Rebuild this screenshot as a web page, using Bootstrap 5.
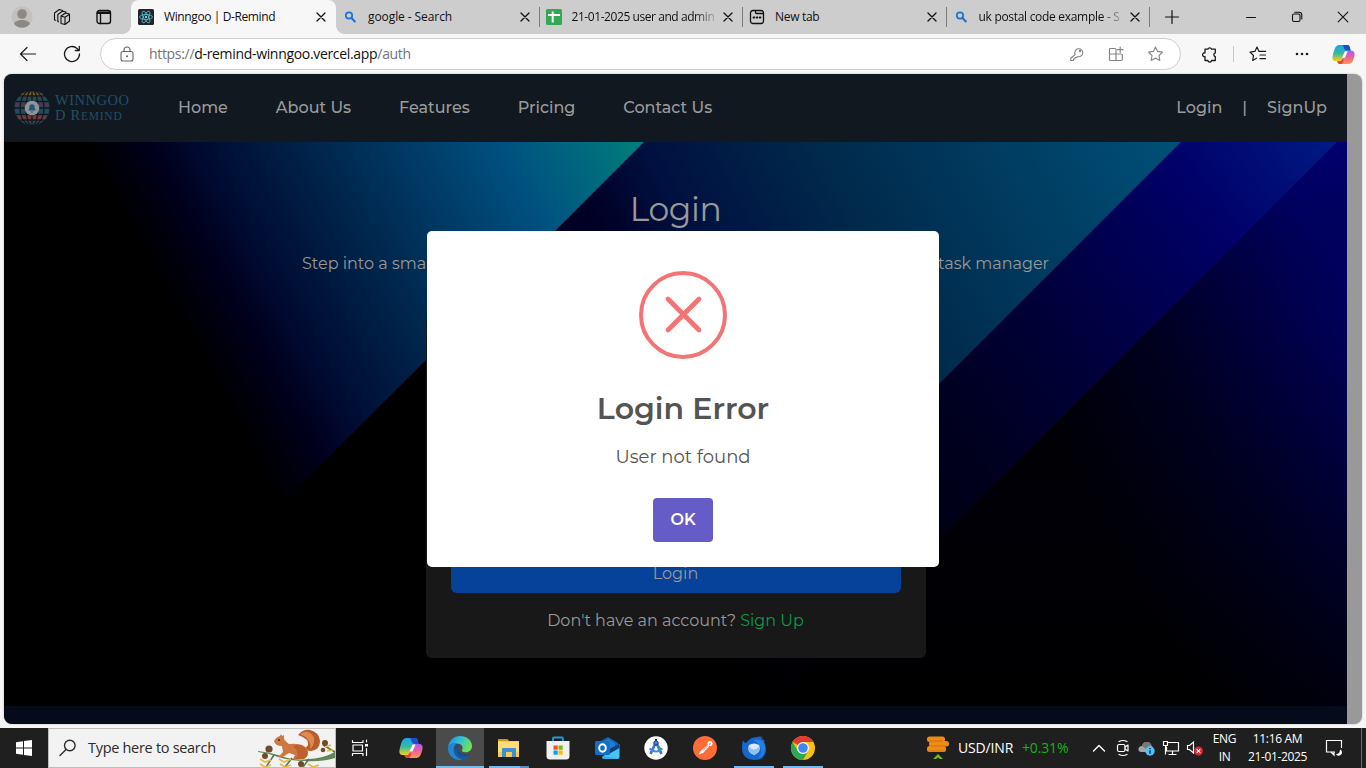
<!DOCTYPE html>
<html lang="en">
<head>
<meta charset="utf-8">
<meta name="viewport" content="width=device-width, initial-scale=1">
<title>Winngoo | D-Remind</title>
<link href="https://cdn.jsdelivr.net/npm/bootstrap@5.3.0/dist/css/bootstrap.min.css" rel="stylesheet">
<style>
html,body{width:1366px;height:768px;overflow:hidden}
body{font-family:"Open Sans","Noto Sans",sans-serif;font-size:12px;line-height:16px;background:#f7f7f7;color:#111}
svg{display:block;flex:none}
.t{white-space:nowrap;flex:none}
.ln{fill:none;stroke:currentColor;stroke-linecap:round;stroke-linejoin:round}
.tabstrip{height:34px;background:#cdcdcd}
.cell{flex:none;display:flex;align-items:center;justify-content:center}
.w-20{width:20px}.w-22{width:22px}.w-23{width:23px}.w-24{width:24px}.w-26{width:26px}.w-36{width:36px}.w-37{width:37px}.w-43{width:43px}.w-44{width:44px}.w-46{width:46px}.w-48{width:48px}.w-51{width:51px}.w-57{width:57px}.w-66{width:66px}.w-69{width:69px}
.btab{width:203.5px;height:34px;padding-left:6px;padding-right:9px;position:relative;flex:none}
.btab.sep::after{content:"";position:absolute;right:0;top:7px;width:1px;height:20px;background:#7b7b7b}
.btab .cap{margin-left:10px;width:148px;flex:none;height:17px;line-height:16px;white-space:nowrap}
.btab .fade-end{-webkit-mask-image:linear-gradient(90deg,#000 122px,rgba(0,0,0,.1) 145px)}
.btab.on{width:205px;background:#f7f7f7;border-radius:8px 8px 0 0;padding-left:7px}
.btab.on::before,.btab.on .flare{content:"";position:absolute;bottom:0;width:8px;height:8px}
.btab.on::before{left:-8px;background:radial-gradient(circle at 0 0,transparent 7.5px,#f7f7f7 8px)}
.btab.on .flare{right:-8px;background:radial-gradient(circle at 100% 0,transparent 7.5px,#f7f7f7 8px)}
.ls-a{letter-spacing:-.39px}.ls-b{letter-spacing:-.08px}.ls-c{letter-spacing:-.43px}.ls-d{letter-spacing:-.3px}
.toolbar{height:40px;color:#1b1b1b}
.address{width:1081px;height:32px;border:1px solid #cfcdd3;border-radius:16px;background:#fff}
.url{font-size:14px;line-height:20px;color:#71757c;letter-spacing:-.32px}
.url b{font-weight:400;color:#111}
.frame{width:1358px;height:650px;margin-left:4px;border-radius:8px;overflow:hidden;background:#999;box-shadow:0 0 2px rgba(0,0,0,.3)}
.site{width:1343px;height:650px;position:relative;font-family:Montserrat,Inter,sans-serif;font-size:16px;line-height:24px;color:#999}
.sitebar{height:68px;background:#12181f;font-weight:500;color:#9b9b9b}
.brand{font-family:"Liberation Serif",serif;color:#215068;font-size:14.5px;line-height:15px;font-weight:400;margin-left:4px;width:75px}
.hero{height:564px;position:relative;background:#000}
.hero>.art{position:absolute;left:0;top:0}
.hero .body{position:relative}
.hero h1{font-size:33px;line-height:40px;font-weight:400;margin:0;padding-top:47px;letter-spacing:-.4px}
.lede{width:747px;margin-top:23px}
.login-card{width:500px;height:340px;margin-top:42px;background:rgba(25,25,25,.95);border-radius:6px;padding:0 25px 25px}
.login-btn{background:#07429a;color:#999;border-radius:6px;height:40px;line-height:42px}
.foot{height:18px;background:#050b1a}
.dialog{position:absolute;left:423px;top:157px;width:512px;height:336px;background:#fff;border-radius:5px;color:#545454}
.dialog .ring{margin-top:40px}
.dialog h2{font-size:30px;line-height:36px;font-weight:600;margin:32px 0 0}
.dialog p{font-size:18px;line-height:24px;margin:18px 0 0}
.dialog .ok{width:60px;height:44px;line-height:44px;background:#665cc7;color:#fff;font-weight:600;border-radius:4px;margin-top:29px;padding:0;border:0}
.taskbar{height:40px;margin-top:4px;background:#1f1f1f;color:#fff}
.find{width:288px;height:40px;background:#f2f2f2;border:1px solid #bdbdbd;color:#2b2b2b;font-size:14.5px;letter-spacing:-.3px}
.app{width:48px;height:40px;margin-right:1px;position:relative}
.app.open::after{content:"";position:absolute;left:4px;right:4px;bottom:0;height:2px;background:#76b9ed}
.app.current{background:#4b4b4b}
.app.current::after{left:0;right:0}
.app.stack::after{background:linear-gradient(90deg,#76b9ed 31px,#5d8db5 31px)}
.tray{width:440px;height:40px}
.rate{font-size:14px;letter-spacing:-.15px}.up{color:#14b414}
.clock{line-height:18px;letter-spacing:-.35px}
.deskline{width:1px;height:40px;background:#6b6b6b;margin-right:4px}
</style>
</head>
<body>
<svg width="0" height="0" class="position-absolute">
<defs>
<linearGradient id="cpA" x1="0" y1="0" x2="0" y2="1"><stop offset="0" stop-color="#18a5f0"/><stop offset=".5" stop-color="#35b9a0"/><stop offset="1" stop-color="#f5d21c"/></linearGradient>
<linearGradient id="cpB" x1="0" y1="0" x2="0" y2="1"><stop offset="0" stop-color="#a95cf0"/><stop offset=".5" stop-color="#f0609a"/><stop offset="1" stop-color="#ff9a4a"/></linearGradient>
<symbol id="copilot" viewBox="0 0 24 22"><path d="M8 1h8c2 0 2.500 1.500 3 4l.6 2h-3.600c-2 0-2.700 1-3.300 3l-1.700 5.500C10.300 17.500 9.500 18 7.500 18H4c-3 0-4-2-3.500-5C1.500 8 2.700 4.500 4 2.800 5 1.500 6 1 8 1z" fill="url(#cpA)"/><path d="M11 1h5c2 0 2.500 1.500 3 4l.6 2h-3.600c-2 0-3-1-3.500-3z" fill="#1a4fd0"/><path d="M16 21H9.500C7 21 6 20 5.300 18h2.200c2 0 2.800-.500 3.500-2.500L13.200 9c.6-1.500 1.300-2 3-2H20c3 0 4 2 3.500 5-1 4.500-2 7-3.500 8-1 .8-2 1-4 1z" fill="url(#cpB)"/><path d="M5.300 18h2.200c2 0 2.800-.500 3.500-2.500l1.200 1.500c-.7 2.500-1.200 4-2.700 4C7 21 6 20 5.300 18z" fill="#e8413a"/><path d="M13.500 7.500h3l-3 7h-3z" fill="#fff"/></symbol>
<symbol id="close" viewBox="0 0 12 12"><path class="ln" stroke-width="1.300" d="M2 2l8 8M10 2l-8 8"/></symbol>
<symbol id="lens" viewBox="0 0 16 16"><circle cx="7" cy="6.500" r="3.200" fill="none" stroke="#1a73cf" stroke-width="1.700"/><path d="M9.500 9l3.300 3.500" stroke="#1a73cf" stroke-width="2" stroke-linecap="round"/></symbol>
</defs></svg>

<div class="tabstrip d-flex align-items-center">
  <div class="cell w-44"><svg width="22" height="22" viewBox="0 0 22 22"><circle cx="11" cy="11" r="10.500" fill="#c4c0bb"/><circle cx="11" cy="8" r="4.800" fill="#8c8985"/><path d="M3 18c1-3 4-4 8-4s7 1 8 4a10.500 10.500 0 0 1-16 0z" fill="#8c8985"/></svg></div>
  <div class="cell w-36"><svg width="18" height="18" viewBox="0 0 18 18" class="ln" stroke-width="1.100"><path d="M8 8l4.500-3 4 1v7l-4.500 3.500-4-1zM8 8l4 1.200 4.500-3M12 9.200v7M5.500 13.800l-.7-.2V6.500l4.700-3.300 3.500.8M2.700 12.300l-1.200-.3V5L6.300 1.500l3.500 1"/></svg></div>
  <div class="cell w-48"><svg width="16" height="16" viewBox="0 0 16 16" class="ln" stroke-width="1.400"><rect x="1" y="1.500" width="13.500" height="13" rx="2.500"/><path d="M1.500 3.200h12.500M1.500 4.400h12.500M4.500 5v9.500"/></svg></div>
  <div class="btab on d-flex align-items-center" style="margin-left:3px"><i class="flare"></i>
    <svg width="16" height="16" viewBox="0 0 16 16"><rect width="16" height="16" rx="1.500" fill="#242424"/><g fill="none" stroke="#55c4dc" stroke-width=".8"><ellipse cx="8" cy="8" rx="6.500" ry="2.500"/><ellipse cx="8" cy="8" rx="6.500" ry="2.500" transform="rotate(60 8 8)"/><ellipse cx="8" cy="8" rx="6.500" ry="2.500" transform="rotate(120 8 8)"/></g><circle cx="8" cy="8" r="1.200" fill="#61dafb"/></svg>
    <div class="cap ls-a">Winngoo | D-Remind</div><svg width="12" height="12" class="ms-auto"><use href="#close"/></svg></div>
  <div class="btab sep d-flex align-items-center"><svg width="16" height="16"><use href="#lens"/></svg><div class="cap ls-b">google - Search</div><svg width="12" height="12" class="ms-auto"><use href="#close"/></svg></div>
  <div class="btab sep d-flex align-items-center"><svg width="16" height="16"><rect width="16" height="16" rx="1.500" fill="#34a853"/><path d="M2 6h12M6.700 2.500v11" stroke="#fff" stroke-width="2"/></svg><div class="cap fade-end ls-c">21-01-2025 user and admin</div><svg width="12" height="12" class="ms-auto"><use href="#close"/></svg></div>
  <div class="btab sep d-flex align-items-center"><svg width="16" height="16" class="ln" stroke-width="1.300"><rect x="1.500" y="1.500" width="13" height="13" rx="2.500"/><path d="M6.500 2v1.500q0 1 1 1h6.500"/><path d="M4.500 8.500h.8M7.600 8.500h.8M10.700 8.500h.8" stroke-width="1.800"/></svg><div class="cap ls-d">New tab</div><svg width="12" height="12" class="ms-auto"><use href="#close"/></svg></div>
  <div class="btab sep d-flex align-items-center"><svg width="16" height="16"><use href="#lens"/></svg><div class="cap fade-end ls-d">uk postal code example - S</div><svg width="12" height="12" class="ms-auto"><use href="#close"/></svg></div>
  <div class="cell w-43"><svg width="16" height="16" class="ln" stroke-width="1.200"><path d="M8 1.500v13M1.500 8h13"/></svg></div>
  <div class="cell ms-auto w-46"><svg width="12" height="12" class="ln"><path d="M1.500 6.500h9"/></svg></div>
  <div class="cell w-46"><svg width="12" height="12" class="ln" stroke-width="1.100"><rect x="1.500" y="3" width="7.500" height="7.500" rx="1.500"/><path d="M3.800 1.200h4.200q2.800 0 2.800 2.800v4"/></svg></div>
  <div class="cell w-46"><svg width="12" height="12" class="ln" stroke-width="1.100"><path d="M1.200 1.200l9.600 9.600M10.800 1.200L1.200 10.800"/></svg></div>
</div>

<div class="toolbar d-flex align-items-center">
  <div class="cell ps-2 w-48"><svg width="18" height="16" viewBox="0 0 18 16" class="ln" stroke-width="1.200"><path d="M16.500 8H1.500M8 1.500L1.500 8 8 14.500"/></svg></div>
  <div class="cell w-48"><svg width="18" height="18" class="ln" stroke-width="1.300"><path d="M16.500 9a7.500 7.500 0 1 1-2.300-5.400L16 5.300M16.300 1.500v4h-4"/></svg></div>
  <div class="address d-flex align-items-center ms-1">
    <div class="cell w-48 ps-1"><svg width="14" height="16" viewBox="0 0 14 16" class="ln" color="#666" stroke-width="1.100"><rect x="1" y="5.500" width="12" height="9.500" rx="2"/><path d="M4 5.500V4q0-3 3-3t3 3v1.500"/><circle cx="7" cy="10.200" r=".5"/></svg></div>
    <div class="url t"><span>https://</span><b>d-remind-winngoo.vercel.app</b><span>/auth</span></div>
    <div class="d-flex ms-auto" style="color:#858585;margin-right:16px;gap:23px">
      <svg width="16" height="16" viewBox="0 0 16 16" class="ln" stroke-width="1.100"><path d="M6.200 8.500a4 4 0 1 1 2.300 2l-1 1H6v1.500H4.500V14.500H1.700v-2z"/><circle cx="11" cy="5" r=".7"/></svg>
      <svg width="16" height="16" class="ln" stroke-width="1.200"><path d="M8 14.500H2.500q-1 0-1-1v-10q0-1 1-1H7q1 0 1 1v11h5q1.300 0 1.300-1.200V9q0-1-1-1H1.500M12.200 1v5.500M9.500 3.700H15"/></svg>
      <svg width="17" height="16" viewBox="0 0 16 16" class="ln" stroke-width="1.100"><path d="M8 1l2.100 4.400 4.900.7-3.500 3.400.8 4.900L8 12.100l-4.300 2.300.8-4.900L1 6.100l4.900-.7z"/></svg>
    </div>
  </div>
  <div class="cell w-57"><svg width="17" height="17" viewBox="0 0 17 17" class="ln" stroke-width="1.300"><path d="M4 3.200h2.800a2 2 0 0 1 3.800 0h3.700v3.700a1.900 1.900 0 0 0 0 3.700v3.900h-3.600a2 2 0 0 1-3.900 0H4v-3.800a2 2 0 1 1 0-3.900z"/></svg></div>
  <div style="width:1px;height:16px;background:#c8c8c8;margin-right:13px;margin-left:-5px"></div>
  <div class="cell w-22"><svg width="18" height="16" viewBox="0 0 18 16" class="ln" stroke-width="1.200"><path d="M10 5.400L8 1 5.900 5.400 1 6.100l3.500 3.400-.8 4.900L7.500 12.200M10 5.400h6.500M11 9h5.500M11 12.700h5.500"/></svg></div>
  <div class="cell w-66"><svg width="16" height="4"><g fill="#1b1b1b"><circle cx="3" cy="2" r="1.300"/><circle cx="8" cy="2" r="1.300"/><circle cx="13" cy="2" r="1.300"/></g></svg></div>
  <div class="cell w-20"><svg width="23" height="21" style="margin-left:-3px"><use href="#copilot"/></svg></div>
</div>

<div class="frame">
 <div class="site">
  <nav class="sitebar d-flex align-items-center">
    <svg width="38" height="38" viewBox="0 0 38 38" style="margin-left:9px">
      <circle cx="19" cy="19" r="17.500" fill="#224b5e"/>
      <path d="M9 5Q19-2 29 5L31 8H7z" fill="#6f5527"/><path d="M3 13h32l1 5H2z" fill="#413d58"/><path d="M4 26h30l-4 6H8z" fill="#713b3e"/>
      <g fill="none" stroke="#12181f" stroke-width="1.300"><path d="M19 1v36M1 19h36M3 12.500h32M6 7h26M3 25.500h32M7 31h24"/><ellipse cx="19" cy="19" rx="6" ry="18"/><ellipse cx="19" cy="19" rx="12" ry="18"/></g>
      <circle cx="19" cy="19" r="7.300" fill="#929496"/><path d="M15.300 21.500q1-1 1-3.500 0-2.700 2.700-2.700t2.700 2.700q0 2.500 1 3.500zM17.500 22.500h3l-1.500 1.500z" fill="#205a78"/></svg>
    <div class="brand"><div class="t" style="letter-spacing:.5px">WINNGOO</div><div class="t" style="letter-spacing:.75px">D R<span style="font-size:11.500px">EMIND</span></div></div>
    <div class="d-flex" style="margin-left:48px;gap:48px">
      <span class="t">Home</span><span class="t">About Us</span><span class="t">Features</span><span class="t">Pricing</span><span class="t">Contact Us</span>
    </div>
    <div class="d-flex ms-auto" style="margin-right:20px;gap:20px"><span class="t">Login</span><span class="t">|</span><span class="t">SignUp</span></div>
  </nav>
  <section class="hero">
   <svg class="art" width="1343" height="564" viewBox="4 142 1343 564">
    <defs>
     <linearGradient id="g1" gradientUnits="userSpaceOnUse" x1="97" y1="171" x2="530.700" y2="-64.500"><stop offset="0" stop-color="#000"/><stop offset=".12" stop-color="#00001c"/><stop offset=".2" stop-color="#000a30"/><stop offset=".43" stop-color="#00284f"/><stop offset=".74" stop-color="#005080"/><stop offset="1" stop-color="#007e7c"/></linearGradient>
     <linearGradient id="g2" gradientUnits="userSpaceOnUse" x1="590" y1="210" x2="1074" y2="-53"><stop offset="0" stop-color="#000024"/><stop offset=".14" stop-color="#001040"/><stop offset=".42" stop-color="#002a4c"/><stop offset="1" stop-color="#005078"/></linearGradient>
     <linearGradient id="g3" gradientUnits="userSpaceOnUse" x1="690" y1="640" x2="1340" y2="142"><stop offset="0" stop-color="#000"/><stop offset=".4" stop-color="#00001c"/><stop offset=".58" stop-color="#000038"/><stop offset=".82" stop-color="#000068"/><stop offset="1" stop-color="#001b85"/></linearGradient>
     <linearGradient id="g4" gradientUnits="userSpaceOnUse" x1="1075" y1="480" x2="1365" y2="320"><stop offset="0" stop-color="#000"/><stop offset=".4" stop-color="#00001e"/><stop offset=".8" stop-color="#00004a"/><stop offset="1" stop-color="#000060"/></linearGradient>
     <linearGradient id="g5" gradientUnits="userSpaceOnUse" x1="0" y1="142" x2="0" y2="706"><stop offset="0" stop-color="#000080" stop-opacity=".5"/><stop offset=".3" stop-color="#000030" stop-opacity="0"/><stop offset="1" stop-color="#000" stop-opacity=".5"/></linearGradient>
    </defs>
    <path fill="url(#g2)" d="M643 142h540L700 623V142z"/><path fill="url(#g2)" d="M643 142L426 359h300V142z"/>
    <path fill="url(#g1)" d="M4 142h640L80 706H4z"/>
    <path fill="url(#g3)" d="M1181 142h157L774 705H618z"/>
    <path fill="url(#g4)" d="M1337 142h10v564H773z"/><path fill="url(#g5)" d="M1337 142h10v564H773z"/>
   </svg>
   <div class="body d-flex flex-column align-items-center">
    <h1 class="t">Login</h1>
    <div class="lede d-flex justify-content-between"><span class="t">Step into a sma</span><span class="t">task manager</span></div>
    <div class="login-card d-flex flex-column justify-content-end text-center">
      <div class="login-btn">Login</div>
      <div style="margin-top:16px">Don't have an account? <span style="color:#0b9a4a">Sign Up</span></div>
    </div>
   </div>
  </section>
  <div class="foot"></div>
  <div class="dialog d-flex flex-column align-items-center" role="dialog">
    <svg class="ring" width="88" height="88" fill="none" stroke="#f27474"><circle cx="44" cy="44" r="42" stroke-width="4"/><path d="M29 28l31 31M60 28L29 59" stroke-width="4.700" stroke-linecap="round"/></svg>
    <h2>Login Error</h2>
    <p>User not found</p>
    <button class="ok">OK</button>
  </div>
 </div>
</div>

<div class="taskbar d-flex align-items-center">
  <div class="cell w-48"><svg width="16" height="16" fill="#fff"><path d="M0 2.300l7-1v6.200H0zM8 1.100L16 0v7.500H8zM0 8.500h7v6.200l-7-1zM8 8.500h8V16l-8-1.100z"/></svg></div>
  <div class="find d-flex align-items-center">
    <svg width="18" height="18" class="ln" stroke-width="1.400" style="margin-left:10px"><circle cx="10.800" cy="6.500" r="5.300"/><path d="M7 10.500L1 16.500"/></svg>
    <span class="t" style="margin-left:11px">Type here to search</span>
    <svg width="78" height="38" viewBox="258 729 78 38" class="ms-auto">
      <path d="M259 751q10 1 20 4 16 6 30 4 14 0 27-7v6q-14 4-30 3-14 0-27-4-10-4-20-5z" fill="#5f8559"/><path d="M275 755l-8 12M293 758l-7 9M310 759l-6 8M336 752l-12-7" stroke="#54794f" stroke-width="1.600"/>
      <path d="M261 759l5 3 6-2M261 764l5 3 6-2M280 759l5 3 7-3M281 764l5 3 6-2M309 764l5 3 6-2M326 747l6-2M328 751l6-1" stroke="#e5b84d" stroke-width="1.600" fill="none"/>
      <g fill="#71492b"><circle cx="270" cy="749" r="3.600"/><circle cx="266" cy="756" r="3"/><circle cx="302" cy="764" r="3"/><circle cx="326" cy="743" r="3"/><circle cx="324" cy="750" r="2.300"/></g>
      <path d="M299 735q5-6 12-5 9 2 10 11 0 9-9 10-6 0-6-3 5-3 2-8-3-3-9-5z" fill="#b95d2b"/><path d="M301 734q6-4 10-1 5 3 4 9-1 5-4 7 1-6-2-9-3-4-8-6z" fill="#dc8a52"/>
      <path d="M275 741q2-4 6-5l1-2 1 2 2-1v4q2 3 5 5 7-1 13 1 7 3 6 9-1 4-5 5h-10l2-4-6-2-6 4h-5l5-5-1-6q-7 0-8-5z" fill="#cf7740"/><path d="M294 746q9-3 13 3 4 7-2 10h-9q6-5-2-13z" fill="#bd622e"/><circle cx="280" cy="740" r=".9" fill="#222"/>
    </svg>
  </div>
  <div class="cell w-51 pe-1"><svg width="18" height="18" class="ln" stroke-width="1.200"><path d="M1.500 1.500v2h10.500v-2M2 6h9.500v6H2zM1.500 16.500v-2h10.500v2M15.500 1v2M15.500 9.500v7"/><path d="M15.500 5v2.500" stroke-width="3" stroke-linecap="butt"/></svg></div>
  <div class="cell app"><svg width="24" height="22"><use href="#copilot"/></svg></div>
  <div class="cell app open current"><svg width="24" height="24" viewBox="0 0 24 24"><defs><linearGradient id="eg" x1="0" y1="0" x2="1" y2=".4"><stop offset="0" stop-color="#1689d8"/><stop offset=".5" stop-color="#31bfd8"/><stop offset="1" stop-color="#6ee05a"/></linearGradient></defs><path d="M.2 11C.8 4.500 6 0 12 0c7 0 12 4.800 12 10 0 4-3 6.300-6.500 6.300-3 0-4.300-1-3.500-2.200 2.500-4-2-7-6-6.500C4 8 1 9 .2 11z" fill="url(#eg)"/><path d="M0 12.500C0 8.500 4.500 6 9 7.300c-2.500 1.500-4 4.500-3 8.500 1 4 4.500 7.200 8.500 8C7 25.500 0 20 0 12.500z" fill="#1f86d3"/><path d="M9 8.500c-4 3-3 9.500 1 12.500 4 2.800 9 1.500 12-3-3 1.500-8 1-10.300-1.500C9.300 14 9.500 11 11.500 9z" fill="#124e96"/><path d="M6 15c1 5 5 8 9 8.700 3-.700 5.500-2.500 7-5.700-3 2.700-7.500 3.500-10.500 1.500C9 18 8.500 15 9 12z" fill="#155ba6"/></svg></div>
  <div class="cell app open stack"><svg width="24" height="22" viewBox="0 0 24 22"><path d="M1 2h9l2 2h10v16H1z" fill="#f7ca55"/><path d="M1 2h9l1.500 2H1z" fill="#d7950f"/><path d="M1 5h21v10H1z" fill="#ffdc75"/><path d="M5 12q0-1 1-1h12q1 0 1 1v8h-4v-5H9v5H5z" fill="#3b8fd2"/></svg></div>
  <div class="cell app"><svg width="24" height="24" viewBox="0 0 24 24"><path d="M7 6V2.500q0-1 1-1h8q1 0 1 1V6" fill="none" stroke="#1e9be0" stroke-width="1.800"/><path d="M.5 5h23v15q0 3.500-3.500 3.500H4Q.5 23.500.5 20z" fill="#f1f1f1"/><path d="M7.500 9.500h4.200v4.200H7.500z" fill="#f25022"/><path d="M12.500 9.500h4.200v4.200h-4.200z" fill="#7fba00"/><path d="M7.500 14.500h4.200v4.200H7.500z" fill="#00a4ef"/><path d="M12.500 14.500h4.200v4.200h-4.200z" fill="#ffb900"/></svg></div>
  <div class="cell app"><svg width="25" height="24" viewBox="0 0 25 24"><path d="M4 6L13 1l10 6v10H4z" fill="#1264b5"/><path d="M7 7l6-4 7 4v8H7z" fill="#1c7fd4"/><path d="M24.500 8v12.500q0 2.500-2.500 2.500H9q-2 0-2-2z" fill="#46c7f3"/><path d="M24.500 8v4L12 19v-5z" fill="#123f82"/><path d="M8 20l16 3H9q-2 0-1-3z" fill="#2bb0ea"/><rect y="5" width="15" height="14" rx="1.500" fill="#0f6fc9"/><ellipse cx="7.500" cy="12" rx="3.300" ry="3.700" fill="none" stroke="#fff" stroke-width="2"/></svg></div>
  <div class="cell app"><svg width="24" height="24" viewBox="0 0 24 24"><circle cx="12" cy="12" r="11.700" fill="#fff"/><path d="M12 6L6.500 18M12 6l5.500 12" stroke="#3d77dd" stroke-width="2.800"/><path d="M5.500 12.500q6.500 6 13 0" fill="none" stroke="#4285f4" stroke-width="2"/><path d="M15 10l3 3-1.500 1.500-2-2z" fill="#3ca45c"/><circle cx="12" cy="7" r="2.200" fill="#4285f4" stroke="#293a50"/><path d="M12 3v2" stroke="#293a50" stroke-width="2"/></svg></div>
  <div class="cell app"><svg width="24" height="24" viewBox="0 0 24 24"><circle cx="12" cy="12" r="12" fill="#ff6c37"/><path d="M5.500 18.500l2-3.500 7-6 1.500 1.500-6 6.500z" fill="#fff"/><path d="M10 14.500l5-5" stroke="#e08060"/><circle cx="17" cy="7.500" r="2.500" fill="#fff"/><path d="M16 8.500l2-1" stroke="#ff6c37"/></svg></div>
  <div class="cell app open"><svg width="24" height="24" viewBox="0 0 24 24"><path d="M1 4q1 3 3 3Q8 1 15 1q3-1 6 0l-2 1 4 3-1 1q2 3 2 7 0 11-12 11Q0 23 0 12 0 7 1 4z" fill="#1467cc"/><path d="M11 4q7-2 11 3 3 8-2 13-2 2-5 3 5-4 4-10-2-6-8-9z" fill="#2580e4"/><path d="M7 9q5-3 10 0 3 7-5 10-8-3-5-10z" fill="#d9ebfa"/><path d="M6.500 10q5.500 7 11 0 1 7-5.500 9-6.500-2-5.500-9z" fill="#8ec2ed"/></svg></div>
  <div class="cell app open"><svg width="24" height="24" viewBox="0 0 24 24"><circle cx="12" cy="12" r="12" fill="#fbc116"/><path d="M12 12L1.600 6A12 12 0 0 1 22.400 6H12z" fill="#e33b2e"/><path d="M1.600 6A12 12 0 0 0 12 24l5.200-9L12 12 6.800 15z" fill="#2da94f"/><circle cx="12" cy="12" r="6" fill="#fff"/><circle cx="12" cy="12" r="4.800" fill="#4285f4"/></svg></div>
  <div class="tray d-flex align-items-center ms-auto">
    <svg width="24" height="26" viewBox="0 0 24 26"><g fill="#ef8a17"><rect x="1" y="1.500" width="18" height="5.500" rx="2.500"/><rect x="3" y="6" width="20" height="5.500" rx="2.500"/><rect x="1" y="11" width="19" height="6" rx="2.500"/></g><path d="M3 6h14M5 11h15M3 16h15" stroke="#c96c0c" stroke-width=".8"/><path d="M7 24l5-5 5 5h-3l-2-1.500L10 24z" fill="#7abb18"/></svg>
    <span class="t rate" style="margin-left:8px;width:56px">USD/INR</span>
    <span class="t rate up" style="margin-left:8px;width:46px">+0.31%</span>
    <div class="cell w-24" style="margin-left:19px"><svg width="14" height="10" class="ln" stroke-width="1.400"><path d="M1.500 8L7 2.500 12.500 8"/></svg></div>
    <div class="cell w-24"><svg width="14" height="18" class="ln" stroke-width="1.200"><rect x="1.500" y="5.500" width="7.500" height="7" rx="1.500"/><path d="M9 8l3-2v6l-3-2M3 2.500q4-2 8 0M3 15.500q4 2 8 0"/></svg></div>
    <div class="cell w-23"><svg width="17" height="16" viewBox="0 0 17 16"><path d="M3.500 12Q0 12 .5 8.500 1 6 4 6q1-4.500 5.500-4 3.500.5 4 4 2 1 1.500 6z" fill="#a4a4a4"/><path d="M4 6q1-4.500 5.500-4 3 .3 3.700 3L8 9z" fill="#777"/><circle cx="12" cy="11" r="4.700" fill="#4cc2ff"/><path d="M12 10.300v3.500M12 8v1.300" stroke="#123" stroke-width="1.300"/></svg></div>
    <div class="cell w-26"><svg width="18" height="16" viewBox="0 0 18 16" class="ln" stroke-width="1.200"><path d="M6.500 2.500h10V11h-12V7M1.500 1.500h4v4h-4zM3.500 5.500V14M10.500 11v3M7 14.500h7"/></svg></div>
    <div class="cell w-22"><svg width="18" height="16" viewBox="0 0 18 16"><path d="M1.500 5.500h2L7.500 2v11l-4-3.500h-2z" fill="none" stroke="#fff" stroke-width="1.200"/><circle cx="12.500" cy="11" r="4.500" fill="#d92638"/><path d="M10.700 9.200l3.600 3.600M14.300 9.200l-3.600 3.600" stroke="#fff" stroke-width="1.200"/></svg></div>
    <div class="cell w-37 flex-column clock"><span>ENG</span><span>IN</span></div>
    <div class="cell w-69 flex-column clock"><span>11:16 AM</span><span>21-01-2025</span></div>
    <div class="cell w-43"><svg width="18" height="18" viewBox="0 0 18 18"><path d="M10 13l-3 0-2.500 0L1.500 13V1.500h15V9" fill="none" stroke="#fff" stroke-width="1.200"/><path d="M6 13l3 3v-3" fill="none" stroke="#fff" stroke-width="1.200"/><path d="M15 10.500a3.200 3.200 0 1 1-4 4.500q4 0 4-4.500z" fill="#fff"/></svg></div>
    <div class="deskline ms-auto"></div>
  </div>
</div>
<script src="https://cdn.jsdelivr.net/npm/bootstrap@5.3.0/dist/js/bootstrap.bundle.min.js"></script>
</body>
</html>
